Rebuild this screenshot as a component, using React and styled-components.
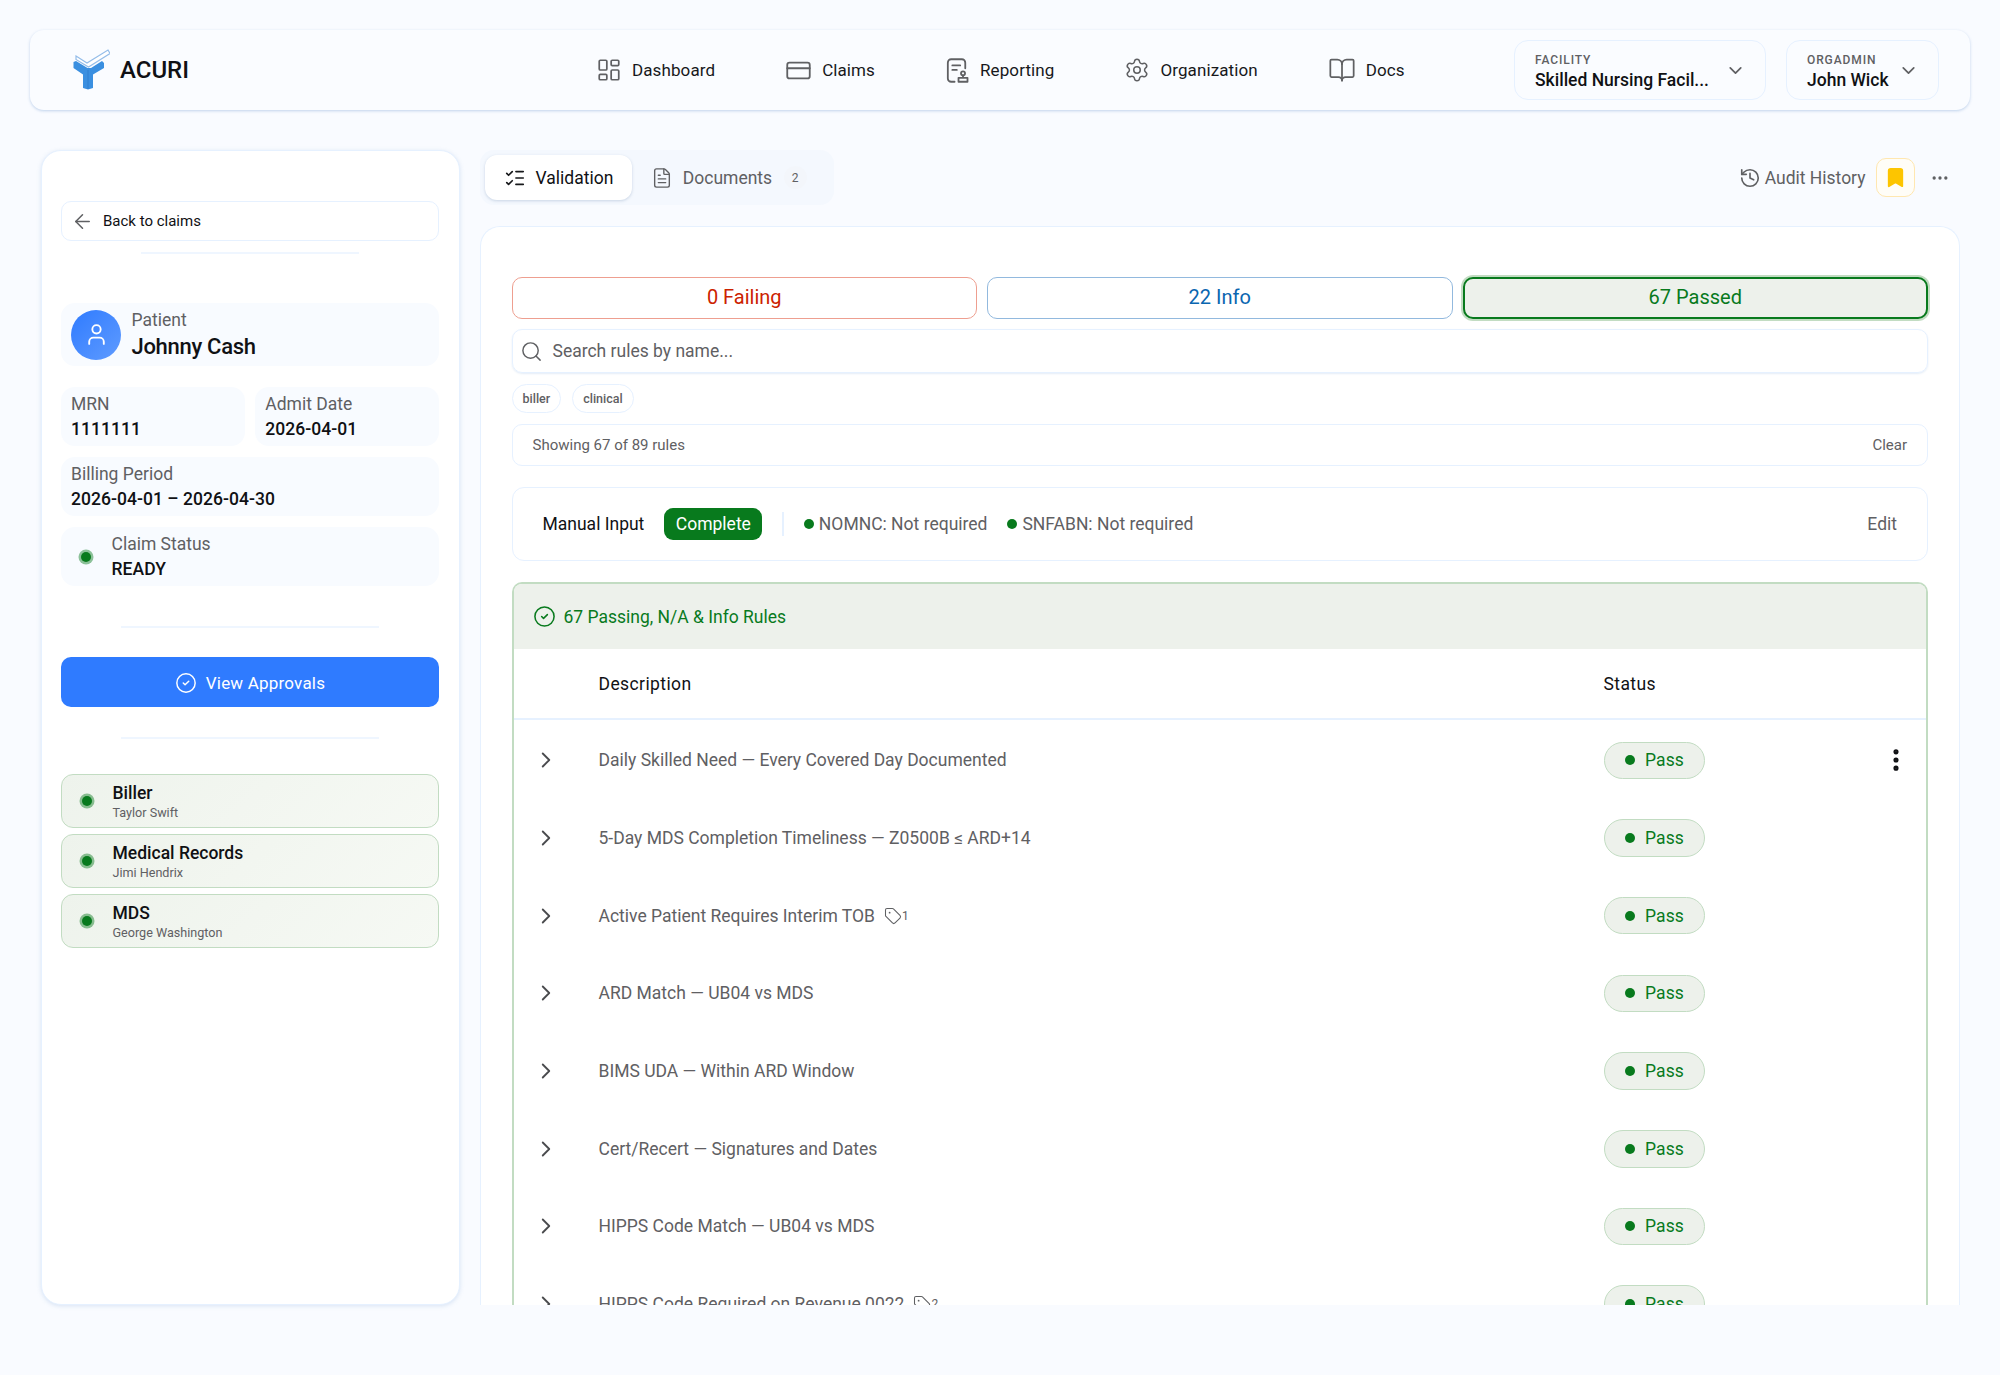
import React from 'react';
import styled, { createGlobalStyle } from 'styled-components';
import {
  LayoutDashboard,
  CreditCard,
  Settings,
  BookOpen,
  ChevronDown,
  ChevronRight,
  ArrowLeft,
  ListChecks,
  FileText,
  History,
  Bookmark,
  Ellipsis,
  EllipsisVertical,
  Search,
  User,
  CircleCheck,
  Tag,
} from 'lucide-react';

const GREEN = '#087a1d';
const GREEN_BORDER = '#c2dcc2';
const GREEN_BG = '#edf1eb';
const LINE = '#e6f1ff';
const MUTED = '#5f6063';

const GlobalStyle = createGlobalStyle`
  html, body { margin: 0; padding: 0; background: #f9fbff; }
  body { font-family: Roboto, "Liberation Sans", sans-serif; color: #101114; }
  * { box-sizing: border-box; }
`;

const Page = styled.div`
  width: 2000px;
  height: 1375px;
  padding: 30px 30px 0;
  overflow: hidden;
`;

const Header = styled.header`
  height: 80px;
  display: flex;
  align-items: center;
  padding: 0 31px 0 42px;
  background: #fafcff;
  border-radius: 14px;
  box-shadow: 0 1px 3px rgba(120, 160, 210, 0.45);
`;

const Brand = styled.div`
  display: flex;
  align-items: center;
  gap: 10px;
  width: 524px;
  font-size: 24px;
  font-weight: 500;
`;

const Nav = styled.nav`
  display: flex;
  align-items: center;
  gap: 70px;
  flex: 1;
`;

const NavItem = styled.div`
  display: flex;
  align-items: center;
  gap: 10px;
  font-size: 17px;
  letter-spacing: 0.1px;
  color: #17181b;
  svg { color: ${MUTED}; }
`;

const Selects = styled.div`
  display: flex;
  gap: 20px;
`;

const SelectBox = styled.div`
  width: ${(p) => p.$w}px;
  height: 60px;
  padding: 0 19px 0 20px;
  display: flex;
  align-items: center;
  justify-content: space-between;
  border: 1.5px solid ${LINE};
  border-radius: 14px;
`;

const SelectText = styled.div`
  display: flex;
  flex-direction: column;
  gap: 3.5px;
  padding-top: 3.5px;
`;

const SelectLabel = styled.span`
  font-size: 12px;
  line-height: 14px;
  font-weight: 500;
  letter-spacing: 0.9px;
  color: ${MUTED};
`;

const SelectValue = styled.span`
  font-size: 17.5px;
  line-height: 21px;
  font-weight: 500;
`;

const Content = styled.div`
  display: grid;
  grid-template-columns: 419px 1fr;
  gap: 20.5px;
  height: 1155px;
  margin-top: 40px;
  padding: 0 10.5px;
`;

const Sidebar = styled.aside`
  display: flex;
  flex-direction: column;
  padding: 50px 19.5px 0;
  background: #fff;
  border: 1.5px solid ${LINE};
  border-radius: 20px;
  box-shadow: 0 1px 4px rgba(120, 160, 210, 0.25);
`;

const BackButton = styled.div`
  height: 40px;
  display: flex;
  align-items: center;
  gap: 9.5px;
  padding: 0 8.5px;
  font-size: 15px;
  border: 1.5px solid ${LINE};
  border-radius: 10px;
  svg { color: ${MUTED}; }
`;

const Divider = styled.div`
  height: 2px;
  background: #eff6ff;
  margin: ${(p) => p.$m};
  width: ${(p) => p.$w}px;
  align-self: center;
`;

const InfoCard = styled.div`
  height: 59.5px;
  padding: 2px 10px 0;
  display: flex;
  flex-direction: column;
  justify-content: center;
  background: #f8fbff;
  border-radius: 14px;
`;

const PatientCard = styled(InfoCard)`
  flex-direction: row;
  justify-content: flex-start;
  align-items: center;
  gap: 10.5px;
  height: 63px;
  padding-top: 0;
  margin-bottom: 20.5px;
`;

const Avatar = styled.div`
  width: 50px;
  height: 50px;
  border-radius: 50%;
  display: grid;
  place-items: center;
  color: #fff;
  background: linear-gradient(135deg, #2f7bff, #5f9bff);
`;

const PatientText = styled.div`
  display: flex;
  flex-direction: column;
  padding-bottom: 2px;
`;

const StatusText = styled.div`
  display: flex;
  flex-direction: column;
`;

const InfoGrid = styled.div`
  display: grid;
  grid-template-columns: 1fr 1fr;
  gap: 10.5px;
`;

const WideCell = styled.div`
  grid-column: 1 / -1;
`;

const Label = styled.span`
  font-size: 17.5px;
  line-height: 25px;
  color: ${MUTED};
`;

const Value = styled.span`
  font-size: 17.5px;
  line-height: 25px;
  font-weight: 500;
  letter-spacing: 0.05px;
`;

const PatientName = styled.span`
  font-size: 22px;
  line-height: 27px;
  font-weight: 500;
  letter-spacing: -0.3px;
`;

const StatusCard = styled(InfoCard)`
  flex-direction: row;
  justify-content: flex-start;
  align-items: center;
  gap: 21px;
  padding-left: 19.5px;
`;

const StatusDot = styled.span`
  flex: none;
  width: 10px;
  height: 10px;
  border-radius: 50%;
  background: ${GREEN};
  box-shadow: 0 0 0 2.5px rgba(8, 122, 29, 0.45);
`;

const ApproveButton = styled.div`
  height: 50px;
  display: flex;
  align-items: center;
  justify-content: center;
  gap: 9px;
  padding-top: 1px;
  color: #fff;
  font-size: 17px;
  letter-spacing: 0.2px;
  background: #2f7bff;
  border-radius: 10px;
`;

const ApprovalList = styled.div`
  display: flex;
  flex-direction: column;
  gap: 6px;
`;

const ApprovalCard = styled.div`
  height: 54px;
  display: flex;
  align-items: center;
  gap: 20.5px;
  padding-left: 20px;
  border: 1.5px solid ${GREEN_BORDER};
  border-radius: 12px;
  background: linear-gradient(135deg, #eef3ec, #f6f9f4);
`;

const ApprovalText = styled.div`
  display: flex;
  flex-direction: column;
  padding-top: 2.5px;
`;

const ApprovalName = styled.span`
  font-size: 17.5px;
  line-height: 21px;
  font-weight: 500;
`;

const ApprovalUser = styled.span`
  font-size: 12.6px;
  line-height: 17px;
  color: ${MUTED};
`;

const MainColumn = styled.main`
  display: flex;
  flex-direction: column;
  gap: 20.5px;
  min-height: 0;
`;

const Toolbar = styled.div`
  height: 55px;
  display: flex;
  align-items: center;
  justify-content: space-between;
`;

const TabGroup = styled.div`
  height: 55px;
  width: 354px;
  padding: 5px;
  display: flex;
  align-items: center;
  gap: 19px;
  background: #f4f8fe;
  border-radius: 14px;
`;

const Tab = styled.div`
  height: 45px;
  display: flex;
  align-items: center;
  gap: 9.5px;
  padding: ${(p) => (p.$active ? '0 19px' : '0')};
  font-size: 17.5px;
  color: ${(p) => (p.$active ? '#101114' : MUTED)};
  background: ${(p) => (p.$active ? '#fff' : 'transparent')};
  border-radius: 12px;
  box-shadow: ${(p) => (p.$active ? '0 1px 3px rgba(100, 130, 170, 0.3)' : 'none')};
`;

const Count = styled.span`
  width: 23px;
  height: 23px;
  margin-left: 2px;
  display: grid;
  place-items: center;
  font-size: 12px;
  border-radius: 50%;
  background: #f3f6fb;
`;

const ToolbarRight = styled.div`
  display: flex;
  align-items: center;
  padding-right: 10px;
`;

const AuditLink = styled.div`
  display: flex;
  align-items: center;
  gap: 4px;
  font-size: 17.5px;
  color: ${MUTED};
`;

const BookmarkButton = styled.div`
  width: 39px;
  height: 39px;
  margin: 0 15px 0 10px;
  display: grid;
  place-items: center;
  background: #fffdf7;
  border: 1.5px solid #ffe7b0;
  border-radius: 10px;
  color: #fdc500;
`;

const Panel = styled.section`
  flex: 1;
  min-height: 0;
  overflow: hidden;
  padding: 50px 30.5px 0;
  background: #fff;
  border: 1.5px solid ${LINE};
  border-bottom: 0;
  border-radius: 20px 20px 0 0;
`;

const FilterRow = styled.div`
  display: grid;
  grid-template-columns: repeat(3, 1fr);
  gap: 10px;
  margin-bottom: 10px;
`;

const FilterButton = styled.div`
  height: 42px;
  display: grid;
  place-items: center;
  padding-bottom: 1px;
  font-size: 20px;
  color: ${(p) => p.$color};
  background: ${(p) => p.$bg || '#fff'};
  border: ${(p) => (p.$active ? '2px' : '1.5px')} solid ${(p) => p.$border};
  border-radius: 10px;
  box-shadow: ${(p) => (p.$active ? `0 0 0 2px ${GREEN_BORDER}` : 'none')};
`;

const SearchBox = styled.div`
  height: 44px;
  display: flex;
  align-items: center;
  gap: 10px;
  padding: 1px 7px 0;
  font-size: 17.5px;
  color: ${MUTED};
  border: 1.5px solid ${LINE};
  border-radius: 10px;
  box-shadow: 0 1px 2px rgba(120, 160, 210, 0.2);
`;

const Chips = styled.div`
  display: flex;
  gap: 11px;
  margin: 11px 0;
`;

const Chip = styled.span`
  height: 29px;
  padding: 0 10px;
  display: flex;
  align-items: center;
  font-size: 12.5px;
  font-weight: 500;
  color: ${MUTED};
  border: 1.5px solid ${LINE};
  border-radius: 15px;
`;

const ResultBar = styled.div`
  height: 42px;
  display: flex;
  align-items: center;
  justify-content: space-between;
  padding: 0 20px;
  font-size: 15px;
  color: ${MUTED};
  border: 1.5px solid ${LINE};
  border-radius: 10px;
`;

const ManualCard = styled.div`
  height: 74px;
  margin: 21px 0;
  display: flex;
  align-items: center;
  padding: 0 30px;
  font-size: 17.5px;
  border: 1.5px solid ${LINE};
  border-radius: 12px;
`;

const ManualLabel = styled.span`
  color: #101114;
  margin-right: 20px;
`;

const CompleteBadge = styled.span`
  height: 32px;
  width: 98px;
  display: grid;
  place-items: center;
  color: #fff;
  background: ${GREEN};
  border-radius: 9px;
`;

const VerticalRule = styled.span`
  width: 1.5px;
  height: 24px;
  margin: 0 20px;
  background: ${LINE};
`;

const Requirement = styled.span`
  display: flex;
  align-items: center;
  gap: 5px;
  margin-right: 20px;
  color: ${MUTED};
  &::before {
    content: '';
    width: 10px;
    height: 10px;
    border-radius: 50%;
    background: ${GREEN};
  }
`;

const EditLink = styled.span`
  margin-left: auto;
  color: ${MUTED};
`;

const RuleGroup = styled.div`
  border: 2px solid ${GREEN_BORDER};
  border-bottom: 0;
  border-radius: 10px 10px 0 0;
`;

const GroupHeader = styled.div`
  height: 65px;
  display: flex;
  align-items: center;
  gap: 8px;
  padding: 1px 0 0 19px;
  font-size: 17.5px;
  color: ${GREEN};
  background: ${GREEN_BG};
  border-radius: 8px 8px 0 0;
`;

const RowList = styled.div`
  padding-top: 2px;
`;

const TableRow = styled.div`
  display: grid;
  grid-template-columns: 85px 1005px 1fr 48px;
  align-items: center;
  height: ${(p) => (p.$head ? '71px' : '77.7px')};
  padding-top: ${(p) => (p.$head ? '2px' : '0')};
  border-bottom: ${(p) => (p.$head ? `2px solid ${LINE}` : '0')};
  font-size: 17.5px;
  color: ${(p) => (p.$head ? '#101114' : MUTED)};
  letter-spacing: ${(p) => (p.$head ? '0.4px' : '0')};
`;

const ExpandCell = styled.div`
  display: flex;
  padding-left: 19px;
  color: #4a4b4e;
`;

const Description = styled.div`
  display: flex;
  align-items: center;
  gap: 9px;
`;

const TagCount = styled.span`
  display: flex;
  align-items: center;
  font-size: 12px;
`;

const PassPill = styled.span`
  width: 101px;
  height: 37.5px;
  display: flex;
  align-items: center;
  gap: 10.5px;
  padding-left: 20px;
  color: ${GREEN};
  letter-spacing: 0.1px;
  background: ${GREEN_BG};
  border: 1.5px solid ${GREEN_BORDER};
  border-radius: 19px;
  &::before {
    content: '';
    width: 10px;
    height: 10px;
    border-radius: 50%;
    background: ${GREEN};
  }
`;

const ActionCell = styled.div`
  display: flex;
  padding-left: 4px;
  color: #101114;
`;

const Logo = () => (
  <svg width="38" height="42" viewBox="0 0 38 42" fill="none">
    <path d="M4 7 L15 14 L36 1 L38 4.500 L16.500 18 L4 10.500 Z" fill="#fff" stroke="#94bde9" strokeWidth="1.2" />
    <path d="M1.500 13 L4 12 L15.500 19 L19 19 L30 12 L32 14 L32 19 L21 25.500 L21 39 L16 40.500 L11 39 L11 25.500 L1.500 19 Z" fill="#3a8fe0" />
    <path d="M16 21 V40" stroke="#2f7fcf" strokeWidth="1" />
  </svg>
);

const ReportIcon = () => (
  <svg width="25" height="27" viewBox="1.100 0 22 24" fill="none" stroke={MUTED} strokeWidth="1.6" strokeLinecap="round" strokeLinejoin="round">
    <path d="M19 10V5a3 3 0 0 0-3-3H6.500a3 3 0 0 0-3 3v14a3 3 0 0 0 3 3h3" />
    <path d="M7.500 7.500h7M7.500 11.500h4" />
    <circle cx="17" cy="14.500" r="1.800" />
    <path d="M17 16.500v1.500M13 18.500h8V22h-8z" />
  </svg>
);

const navItems = [
  { label: 'Dashboard', icon: <LayoutDashboard size={26} strokeWidth={1.6} /> },
  { label: 'Claims', icon: <CreditCard size={27} strokeWidth={1.6} /> },
  { label: 'Reporting', icon: <ReportIcon /> },
  { label: 'Organization', icon: <Settings size={26} strokeWidth={1.4} /> },
  { label: 'Docs', icon: <BookOpen size={28} strokeWidth={1.5} /> },
];

const approvals = [
  { role: 'Biller', user: 'Taylor Swift' },
  { role: 'Medical Records', user: 'Jimi Hendrix' },
  { role: 'MDS', user: 'George Washington' },
];

const rules = [
  { text: 'Daily Skilled Need — Every Covered Day Documented', menu: true },
  { text: '5-Day MDS Completion Timeliness — Z0500B ≤ ARD+14' },
  { text: 'Active Patient Requires Interim TOB', tags: 1 },
  { text: 'ARD Match — UB04 vs MDS' },
  { text: 'BIMS UDA — Within ARD Window' },
  { text: 'Cert/Recert — Signatures and Dates' },
  { text: 'HIPPS Code Match — UB04 vs MDS' },
  { text: 'HIPPS Code Required on Revenue 0022', tags: 2 },
];

const App = () => {
  return (
    <Page>
      <GlobalStyle />
      <Header>
        <Brand>
          <Logo />
          ACURI
        </Brand>
        <Nav>
          {navItems.map((item) => (
            <NavItem key={item.label}>
              {item.icon}
              {item.label}
            </NavItem>
          ))}
        </Nav>
        <Selects>
          <SelectBox $w={252}>
            <SelectText>
              <SelectLabel>FACILITY</SelectLabel>
              <SelectValue>Skilled Nursing Facil...</SelectValue>
            </SelectText>
            <ChevronDown size={21} color={MUTED} />
          </SelectBox>
          <SelectBox $w={153}>
            <SelectText>
              <SelectLabel>ORGADMIN</SelectLabel>
              <SelectValue>John Wick</SelectValue>
            </SelectText>
            <ChevronDown size={21} color={MUTED} />
          </SelectBox>
        </Selects>
      </Header>

      <Content>
        <Sidebar>
          <BackButton>
            <ArrowLeft size={23} strokeWidth={1.6} />
            Back to claims
          </BackButton>
          <Divider $w={218} $m="11px 0 49px" />
          <PatientCard>
            <Avatar>
              <User size={25} strokeWidth={1.8} />
            </Avatar>
            <PatientText>
              <Label>Patient</Label>
              <PatientName>Johnny Cash</PatientName>
            </PatientText>
          </PatientCard>
          <InfoGrid>
            <InfoCard>
              <Label>MRN</Label>
              <Value>1111111</Value>
            </InfoCard>
            <InfoCard>
              <Label>Admit Date</Label>
              <Value>2026-04-01</Value>
            </InfoCard>
            <WideCell>
              <InfoCard>
                <Label>Billing Period</Label>
                <Value>2026-04-01 – 2026-04-30</Value>
              </InfoCard>
            </WideCell>
            <WideCell>
              <StatusCard>
                <StatusDot />
                <StatusText>
                  <Label>Claim Status</Label>
                  <Value>READY</Value>
                </StatusText>
              </StatusCard>
            </WideCell>
          </InfoGrid>
          <Divider $w={258} $m="40px 0 29px" />
          <ApproveButton>
            <CircleCheck size={22} strokeWidth={1.6} />
            View Approvals
          </ApproveButton>
          <Divider $w={258} $m="30px 0 35px" />
          <ApprovalList>
            {approvals.map((a) => (
              <ApprovalCard key={a.role}>
                <StatusDot />
                <ApprovalText>
                  <ApprovalName>{a.role}</ApprovalName>
                  <ApprovalUser>{a.user}</ApprovalUser>
                </ApprovalText>
              </ApprovalCard>
            ))}
          </ApprovalList>
        </Sidebar>

        <MainColumn>
          <Toolbar>
            <TabGroup>
              <Tab $active>
                <ListChecks size={22} color="#17181b" strokeWidth={1.8} />
                Validation
              </Tab>
              <Tab>
                <FileText size={22} strokeWidth={1.5} />
                Documents
                <Count>2</Count>
              </Tab>
            </TabGroup>
            <ToolbarRight>
              <AuditLink>
                <History size={22} strokeWidth={1.8} />
                Audit History
              </AuditLink>
              <BookmarkButton>
                <Bookmark size={23} fill="currentColor" />
              </BookmarkButton>
              <Ellipsis size={20} color={MUTED} />
            </ToolbarRight>
          </Toolbar>

          <Panel>
            <FilterRow>
              <FilterButton $color="#cc2200" $border="#ee9f90">0 Failing</FilterButton>
              <FilterButton $color="#0a66b0" $border="#92b9de">22 Info</FilterButton>
              <FilterButton $active $color={GREEN} $border={GREEN} $bg={GREEN_BG}>67 Passed</FilterButton>
            </FilterRow>
            <SearchBox>
              <Search size={23} strokeWidth={1.5} />
              Search rules by name...
            </SearchBox>
            <Chips>
              <Chip>biller</Chip>
              <Chip>clinical</Chip>
            </Chips>
            <ResultBar>
              <span>Showing 67 of 89 rules</span>
              <span>Clear</span>
            </ResultBar>
            <ManualCard>
              <ManualLabel>Manual Input</ManualLabel>
              <CompleteBadge>Complete</CompleteBadge>
              <VerticalRule />
              <Requirement>NOMNC: Not required</Requirement>
              <Requirement>SNFABN: Not required</Requirement>
              <EditLink>Edit</EditLink>
            </ManualCard>
            <RuleGroup>
              <GroupHeader>
                <CircleCheck size={23} strokeWidth={1.6} />
                67 Passing, N/A &amp; Info Rules
              </GroupHeader>
              <TableRow $head>
                <span />
                <span>Description</span>
                <span>Status</span>
                <span />
              </TableRow>
              <RowList>
                {rules.map((rule) => (
                  <TableRow key={rule.text}>
                    <ExpandCell>
                      <ChevronRight size={26} strokeWidth={1.7} />
                    </ExpandCell>
                    <Description>
                      {rule.text}
                      {rule.tags && (
                        <TagCount>
                          <Tag size={18} strokeWidth={1.4} />
                          {rule.tags}
                        </TagCount>
                      )}
                    </Description>
                    <div>
                      <PassPill>Pass</PassPill>
                    </div>
                    <ActionCell>
                      {rule.menu && <EllipsisVertical size={28} strokeWidth={2.4} />}
                    </ActionCell>
                  </TableRow>
                ))}
              </RowList>
            </RuleGroup>
          </Panel>
        </MainColumn>
      </Content>
    </Page>
  );
};

export default App;
